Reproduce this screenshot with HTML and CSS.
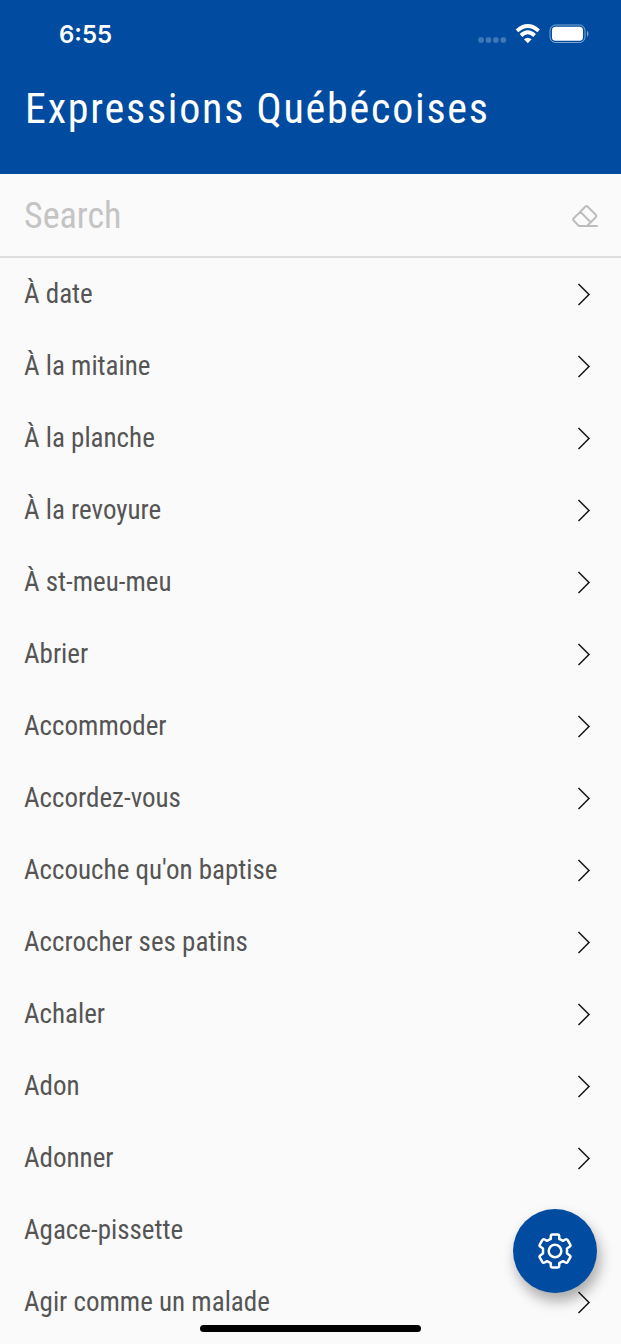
FILE: index.html
```html
<!DOCTYPE html>
<html lang="fr">
<head>
<meta charset="utf-8">
<title>Expressions Québécoises</title>
<link rel="stylesheet" href="styles.css">
</head>
<body>
<svg class="sprite" width="0" height="0"><symbol id="chevron" viewBox="0 0 14 24"><path d="M1.500 2 12 12.500 1.500 23" fill="none" stroke="#161616" stroke-width="1.500"/></symbol></svg>
<header class="header">
  <div class="status">
    <span class="time">6:55</span>
    <svg class="indicators" width="112" height="24" viewBox="0 0 112 24">
      <g fill="#fff" opacity=".25"><rect x="1.300" y="15.200" width="5.500" height="5.500" rx="2"/><rect x="8.700" y="15.200" width="5.500" height="5.500" rx="2"/><rect x="16.100" y="15.200" width="5.500" height="5.500" rx="2"/><rect x="23.500" y="15.200" width="5.500" height="5.500" rx="2"/></g>
      <g fill="none" stroke="#fff" stroke-width="3.800"><path d="M40 8.800Q50.800-.8 61.600 8.800M44 13.500Q50.800 7.200 57.600 13.500"/></g>
      <path d="M47 17.300Q50.800 14.300 54.600 17.300L50.800 21.200Z" fill="#fff"/>
      <rect x="73" y="3" width="35" height="17.500" rx="5.500" fill="none" stroke="#fff" opacity=".5"/>
      <rect x="75" y="4.800" width="31" height="14" rx="3.500" fill="#fff"/>
      <path d="M110 8.500q3 3.300 0 6.500z" fill="#fff" opacity=".5"/>
    </svg>
  </div>
  <h1 class="title">Expressions Québécoises</h1>
</header>
<div class="search">
  <span class="placeholder">Search</span>
  <svg class="eraser" width="28" height="26" viewBox="0 0 28 26"><g fill="none" stroke="#bcbcbc" stroke-width="1.900" stroke-linejoin="round" stroke-linecap="round"><path d="M8 23 2.500 17.500Q1.500 16.500 2.500 15.500L14.500 3.500Q15.500 2.500 16.500 3.500L25 12Q26 13 25 14L16 23M9.500 9 19.500 19M8 23H26"/></g></svg>
</div>
<ul class="list">
  <li class="row"><span>À date</span><svg class="chevron"><use href="#chevron"/></svg></li>
  <li class="row"><span>À la mitaine</span><svg class="chevron"><use href="#chevron"/></svg></li>
  <li class="row"><span>À la planche</span><svg class="chevron"><use href="#chevron"/></svg></li>
  <li class="row"><span>À la revoyure</span><svg class="chevron"><use href="#chevron"/></svg></li>
  <li class="row"><span>À st-meu-meu</span><svg class="chevron"><use href="#chevron"/></svg></li>
  <li class="row"><span>Abrier</span><svg class="chevron"><use href="#chevron"/></svg></li>
  <li class="row"><span>Accommoder</span><svg class="chevron"><use href="#chevron"/></svg></li>
  <li class="row"><span>Accordez-vous</span><svg class="chevron"><use href="#chevron"/></svg></li>
  <li class="row"><span>Accouche qu'on baptise</span><svg class="chevron"><use href="#chevron"/></svg></li>
  <li class="row"><span>Accrocher ses patins</span><svg class="chevron"><use href="#chevron"/></svg></li>
  <li class="row"><span>Achaler</span><svg class="chevron"><use href="#chevron"/></svg></li>
  <li class="row"><span>Adon</span><svg class="chevron"><use href="#chevron"/></svg></li>
  <li class="row"><span>Adonner</span><svg class="chevron"><use href="#chevron"/></svg></li>
  <li class="row"><span>Agace-pissette</span><svg class="chevron"><use href="#chevron"/></svg></li>
  <li class="row row-front"><span>Agir comme un malade</span><svg class="chevron"><use href="#chevron"/></svg></li>
</ul>
<button class="fab" aria-label="Paramètres">
  <svg width="42" height="42" viewBox="-21 -21 42 42" fill="none" stroke="#fff" stroke-width="2.500" stroke-linejoin="round"><circle r="6.300"/><path d="M-2.500-16.500H2.500Q4.200-16.500 4.200-14.800V-12.200L8-10.200 10.300-11.500Q11.800-12.300 12.700-10.900L15.100-6.700Q16-5.200 14.500-4.200L12-2.500V2.500L14.500 4.200Q16 5.200 15.100 6.700L12.700 10.900Q11.800 12.300 10.300 11.500L8 10.200 4.200 12.200V14.800Q4.200 16.500 2.500 16.500H-2.500Q-4.200 16.500-4.200 14.800V12.200L-8 10.200-10.300 11.500Q-11.800 12.300-12.700 10.900L-15.100 6.700Q-16 5.200-14.500 4.200L-12 2.500V-2.500L-14.500-4.200Q-16-5.200-15.100-6.700L-12.700-10.900Q-11.800-12.300-10.300-11.500L-8-10.200-4.200-12.200V-14.800Q-4.200-16.500-2.500-16.500Z"/></svg>
</button>
<div class="home-indicator"></div>
</body>
</html>
```
FILE: styles.css
```css
*{box-sizing:border-box}
body{margin:0;height:1344px;overflow:hidden;position:relative;background:#fafafa;font-family:"Roboto Condensed",Roboto,sans-serif;font-stretch:75%;color:#555}
.sprite{position:absolute}
.header{height:174px;background:#014ca0;color:#fff;overflow:hidden}
.status{display:flex;justify-content:space-between;height:46px;padding:22px 32px 0 59px;font:600 24px/24px Inter,sans-serif}
.time{padding-top:1px}
.title{margin:38px 25px 0;font-weight:400;font-size:42px;line-height:50px;letter-spacing:1.77px;white-space:nowrap}
.search{height:84px;display:flex;align-items:center;justify-content:space-between;padding:0 22px 0 24px;border-bottom:2px solid #ddd}
.placeholder{padding-top:1px;font-size:36px;color:#c4c4c4}
.eraser{margin-top:2px}
.list{margin:0;padding:0 30px 0 24px;list-style:none;font-size:27px;line-height:72px}
.row{display:flex;align-items:center;justify-content:space-between;height:72px}
.row-front{position:relative;z-index:2}
.chevron{width:14px;height:24px}
.fab{position:absolute;z-index:1;left:513px;top:1209px;width:84px;height:84px;padding:0;border:0;border-radius:50%;display:grid;place-items:center;background:#014ca0;box-shadow:3px 8px 14px rgba(0,0,0,.33)}
.home-indicator{position:absolute;z-index:3;left:200px;top:1325px;width:221px;height:7px;border-radius:4px;background:#000}
```
